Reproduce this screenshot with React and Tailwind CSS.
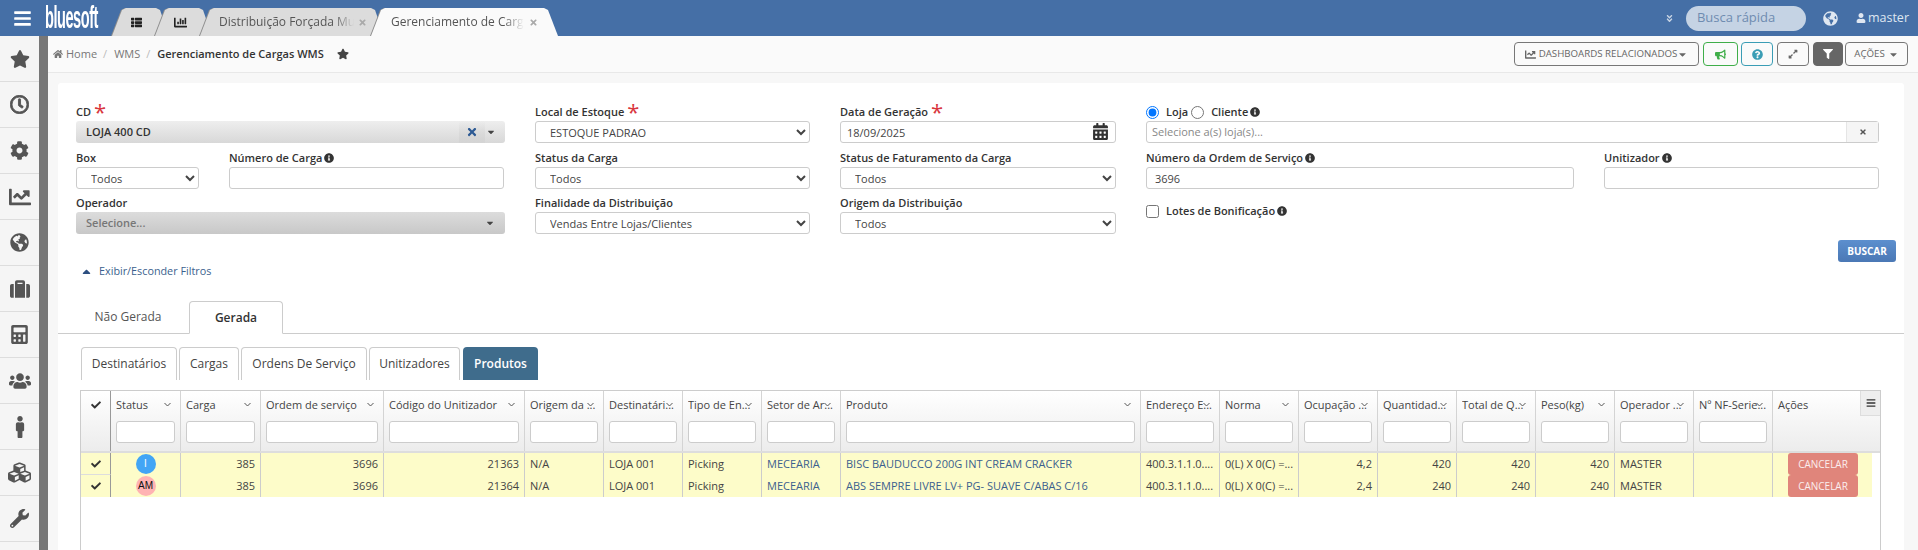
import React from 'react';
import {
  FaStar, FaRegClock, FaCog, FaChartLine, FaGlobeAmericas, FaSuitcase, FaCalculator, FaUsers, FaMale, FaCubes, FaWrench,
  FaHome, FaThList, FaChartBar, FaTimes, FaCheck, FaInfoCircle, FaCalendarAlt, FaBullhorn, FaQuestionCircle, FaExpandAlt,
  FaFilter, FaUser, FaAngleDoubleDown, FaBars, FaCaretDown, FaCaretUp,
} from 'react-icons/fa';

const sideIcons = [
  [FaStar, 'text-[20px]'],
  [FaRegClock, 'text-[19px] [&_svg]:[stroke-width:24]'],
  [FaCog, 'text-[19px]'],
  [FaChartLine, 'text-[22px]'],
  [FaGlobeAmericas, 'text-[19px]'],
  [FaSuitcase, 'text-[20px]'],
  [FaCalculator, 'text-[19px]'],
  [FaUsers, 'text-[22px]'],
  [FaMale, 'text-[22px]'],
  [FaCubes, 'text-[23px]'],
  [FaWrench, 'text-[19px]'],
];

const columns = [
  'Status', 'Carga', 'Ordem de serviço', 'Código do Unitizador', 'Origem da ...', 'Destinatári...', 'Tipo de En...',
  'Setor de Ar...', 'Produto', 'Endereço E...', 'Norma', 'Ocupação ...', 'Quantidad...', 'Total de Q...', 'Peso(kg)',
  'Operador ...', 'Nº NF-Serie...',
];

const rows = [
  { badge: 'I', badgeClass: 'bg-[#42a5f5] text-white', carga: '385', os: '3696', unit: '21363', produto: 'BISC BAUDUCCO 200G INT CREAM CRACKER', ocup: '4,2', qtd: '420' },
  { badge: 'AM', badgeClass: 'bg-[#ffb3b3] text-[#111]', carga: '385', os: '3696', unit: '21364', produto: 'ABS SEMPRE LIVRE LV+ PG- SUAVE C/ABAS C/16', ocup: '2,4', qtd: '240' },
];

const gridCols = 'grid grid-cols-[30px_70px_80px_123px_141px_79px_79px_79px_79px_300px_79px_79px_79px_79px_79px_79px_79px_79px_1fr]';

const Info = () => <FaInfoCircle className="ml-[2px] inline align-[-1px] text-[10px] text-[#333]" />;
const Req = () => <span className="ml-[3px] inline-block h-[10px] align-top text-[22px] font-normal leading-[16px] text-[#d9363e]">*</span>;
const Label = ({ children }) => <label className="block h-[18px] whitespace-nowrap text-[11px] font-semibold leading-[17px] text-[#333]">{children}</label>;

const NativeSelect = ({ value }) => (
  <select defaultValue={value} className="block h-[22px] w-full rounded-[3px] border border-[#ccc] bg-white pl-[10px] text-[11px] text-[#444]" style={{ appearance: 'auto' }}>
    <option>{value}</option>
  </select>
);

const TextInput = ({ value = '', className = '' }) => (
  <input readOnly value={value} className={`block h-[22px] w-full rounded-[3px] border border-[#ccc] bg-white text-[11px] text-[#444] ${className}`} />
);

const OutlineBtn = ({ children, className = '' }) => (
  <button className={`flex h-[24px] items-center justify-center rounded-[4px] border text-[9.7px] font-medium ${className}`}>{children}</button>
);

const Chevron = () => (
  <svg width="7" height="5" viewBox="0 0 7 5" className="absolute right-[4px] top-[5px]">
    <path d="M0.5 1 L3.5 4 L6.5 1" fill="none" stroke="#555" strokeWidth="1" />
  </svg>
);

const cell = 'border-r border-[#ccc] bg-[#fdfcc9] px-[5px]';

const App = () => {
  return (
    <div className="flex h-[550px] w-[1918px] flex-col overflow-hidden bg-white text-[11px] text-[#444] [font-family:'Open_Sans',sans-serif]">
      {/* top bar */}
      <div className="flex h-[36px] shrink-0 items-center bg-[#456fa6] text-white">
        <FaBars className="ml-[13px] text-[19px]" />
        <span className="ml-[13px] w-[55px] origin-left scale-x-[0.47] whitespace-nowrap text-[31px] font-bold leading-[30px] tracking-[-1px] [font-family:'Liberation_Sans',sans-serif]">bluesoft</span>
        <div className="ml-[12px] flex h-[28px] self-end">
          <div className="drop-shadow-[-1px_0_0_#8d8d8d]">
            <div className="flex h-full w-[57px] items-center justify-center bg-[#dcdcdc] pr-[9px] text-[#222] [clip-path:polygon(0_100%,10px_2px,14px_0,44px_0,48px_2px,100%_100%)]"><FaThList className="text-[11px]" /></div>
          </div>
          <div className="-ml-[14px] drop-shadow-[-1px_0_0_#8d8d8d]">
            <div className="flex h-full w-[57px] items-center justify-center bg-[#dcdcdc] pr-[7px] text-[#222] [clip-path:polygon(0_100%,10px_2px,14px_0,44px_0,48px_2px,100%_100%)]"><FaChartBar className="text-[13px]" /></div>
          </div>
          <div className="-ml-[12px] drop-shadow-[-1px_0_0_#8d8d8d]">
            <div className="flex h-full w-[184px] items-center bg-[#dcdcdc] pl-[19px] text-[12px] text-[#555] [clip-path:polygon(0_100%,10px_2px,14px_0,171px_0,175px_2px,100%_100%)]">
              <span className="w-[135px] overflow-hidden whitespace-nowrap [mask-image:linear-gradient(to_right,black_85%,transparent)]">Distribuição Forçada Mu</span>
              <FaTimes className="ml-[4px] text-[9px] text-[#aaa]" />
            </div>
          </div>
          <div className="-ml-[13px] drop-shadow-[-1px_0_0_#8d8d8d]">
            <div className="flex h-full w-[187px] items-center bg-[#fafafa] pl-[20px] text-[12px] text-[#555] [clip-path:polygon(0_100%,10px_2px,14px_0,173px_0,177px_2px,100%_100%)]">
              <span className="w-[133px] overflow-hidden whitespace-nowrap [mask-image:linear-gradient(to_right,black_85%,transparent)]">Gerenciamento de Carg</span>
              <FaTimes className="ml-[5px] text-[9px] text-[#aaa]" />
            </div>
          </div>
        </div>
        <div className="ml-auto flex items-center">
          <FaAngleDoubleDown className="text-[9px] text-[#c8d4e4]" />
          <div className="ml-[12px] flex h-[25px] w-[120px] items-center rounded-full bg-[#c5d3e4] pl-[11px] text-[13px] text-[#6f8cb0]">Busca rápida</div>
          <FaGlobeAmericas className="ml-[17px] text-[15px] text-[#dfe7f1]" />
          <FaUser className="ml-[18px] text-[10px] text-[#dfe7f1]" />
          <span className="ml-[2px] mr-[9px] text-[12.5px] text-[#dfe7f1]">master</span>
        </div>
      </div>

      <div className="flex min-h-0 flex-1">
        {/* sidebar */}
        <div className="w-[39px] shrink-0 bg-[#f5f5f5]">
          {sideIcons.map(([Icon, size], i) => (
            <div key={i} className={`flex h-[46px] items-center justify-center border-b border-[#ddd] text-[#555] ${size}`}><Icon /></div>
          ))}
        </div>
        <div className="w-[9px] shrink-0 bg-[#777]" />

        <div className="min-w-0 flex-1 bg-[#f7f7f7]">
          {/* breadcrumb */}
          <div className="flex h-[37px] items-center border-b border-[#e8e8e8] bg-[#fafafa] pl-[5px] pr-[10px] text-[11px]">
            <FaHome className="text-[10px] text-[#777]" />
            <span className="ml-[3px] text-[#777]">Home</span>
            <span className="ml-[6px] text-[#bbb]">/</span>
            <span className="ml-[7px] text-[#777]">WMS</span>
            <span className="ml-[6px] text-[#bbb]">/</span>
            <span className="ml-[7px] font-semibold text-[#333]">Gerenciamento de Cargas WMS</span>
            <FaStar className="ml-[13px] text-[12px] text-[#444]" />
            <div className="ml-auto flex">
              <OutlineBtn className="w-[185px] border-[#777] text-[#666]"><FaChartLine className="mr-[3px] text-[11px]" />DASHBOARDS RELACIONADOS<FaCaretDown className="text-[11px]" /></OutlineBtn>
              <OutlineBtn className="ml-[4px] w-[35px] border-[#3fae49] text-[#3fae49]"><FaBullhorn className="text-[11px]" /></OutlineBtn>
              <OutlineBtn className="ml-[3px] w-[32px] border-[#3a9db5] text-[#3a9db5]"><FaQuestionCircle className="text-[11px]" /></OutlineBtn>
              <OutlineBtn className="ml-[4px] w-[32px] border-[#777] text-[#666]"><FaExpandAlt className="text-[10px]" /></OutlineBtn>
              <OutlineBtn className="ml-[4px] w-[30px] border-[#666] bg-[#666] text-white"><FaFilter className="text-[10px]" /></OutlineBtn>
              <OutlineBtn className="ml-[2px] w-[63px] border-[#777] text-[#666]">AÇÕES<FaCaretDown className="ml-[3px] text-[11px]" /></OutlineBtn>
            </div>
          </div>

          {/* card */}
          <div className="ml-[10px] mr-[14px] mt-[10px] h-[500px] rounded-t-[3px] bg-white">
            <div className="pl-[18px] pt-[20px]">
              <div className="grid grid-cols-[429px_275px_276px_733px] grid-rows-[41px_40px_40px] gap-x-[30px] gap-y-[5px]">
                <div>
                  <Label>CD<Req /></Label>
                  <div className="flex h-[22px] items-center rounded-[3px] bg-gradient-to-b from-[#eee] to-[#d8d8d8] pl-[10px] pr-[9px] text-[11px] font-semibold text-[#333]">
                    LOJA 400 CD
                    <div className="ml-auto flex h-full w-[26px] items-center justify-center bg-gradient-to-b from-transparent to-[#d4d4d4]"><FaTimes className="text-[12px] text-[#2d5a94]" /></div>
                    <FaCaretDown className="ml-[1px] text-[10px] text-[#444]" />
                  </div>
                </div>
                <div><Label>Local de Estoque<Req /></Label><NativeSelect value="ESTOQUE PADRAO" /></div>
                <div>
                  <Label>Data de Geração<Req /></Label>
                  <div className="relative"><TextInput value="18/09/2025" className="px-[6px]" /><FaCalendarAlt className="absolute right-[7px] top-[2px] text-[17px] text-[#333]" /></div>
                </div>
                <div>
                  <div className="flex h-[18px] items-center text-[11px] font-semibold text-[#333]">
                    <input type="radio" name="tipo" defaultChecked className="m-0 h-[13px] w-[13px]" style={{ appearance: 'auto' }} />
                    <span className="ml-[7px]">Loja</span>
                    <input type="radio" name="tipo" className="ml-[3px] h-[13px] w-[13px]" style={{ appearance: 'auto' }} />
                    <span className="ml-[7px]">Cliente</span><Info />
                  </div>
                  <div className="flex h-[22px] rounded-[3px] border border-[#ccc]">
                    <div className="flex flex-1 items-center pl-[5px] text-[11px] text-[#888]">Selecione a(s) loja(s)...</div>
                    <div className="flex w-[32px] items-center justify-center border-l border-[#e5e5e5] bg-[#f5f5f5]"><FaTimes className="text-[8px] text-[#555]" /></div>
                  </div>
                </div>

                <div className="grid grid-cols-[123px_275px] gap-x-[30px]">
                  <div><Label>Box</Label><NativeSelect value="Todos" /></div>
                  <div><Label>Número de Carga<Info /></Label><TextInput className="px-[8px]" /></div>
                </div>
                <div><Label>Status da Carga</Label><NativeSelect value="Todos" /></div>
                <div><Label>Status de Faturamento da Carga</Label><NativeSelect value="Todos" /></div>
                <div className="grid grid-cols-[428px_275px] gap-x-[30px]">
                  <div><Label>Número da Ordem de Serviço<Info /></Label><TextInput value="3696" className="px-[8px]" /></div>
                  <div><Label>Unitizador<Info /></Label><TextInput className="px-[8px]" /></div>
                </div>

                <div>
                  <Label>Operador</Label>
                  <div className="flex h-[22px] items-center rounded-[3px] bg-gradient-to-b from-[#dcdcdc] to-[#c8c8c8] pl-[10px] pr-[10px] text-[11px] font-semibold text-[#777]">
                    Selecione...
                    <FaCaretDown className="ml-auto text-[10px] text-[#444]" />
                  </div>
                </div>
                <div><Label>Finalidade da Distribuição</Label><NativeSelect value="Vendas Entre Lojas/Clientes" /></div>
                <div><Label>Origem da Distribuição</Label><NativeSelect value="Todos" /></div>
                <div className="flex items-start pt-[9px] text-[11px] font-semibold text-[#333]">
                  <input type="checkbox" className="m-0 mt-[2px] h-[13px] w-[13px]" style={{ appearance: 'auto' }} />
                  <span className="ml-[7px]">Lotes de Bonificação<Info /></span>
                </div>
              </div>

              <div className="relative mt-[29px] flex h-[17px] items-center pl-[4px] text-[10.8px] text-[#3b5f8e]">
                <FaCaretUp className="text-[13px] text-[#2d4f80]" />
                <span className="ml-[6px]">Exibir/Esconder Filtros</span>
                <button className="absolute -top-[23px] right-[8px] h-[22px] w-[58px] rounded-[3px] bg-gradient-to-b from-[#5c8fce] to-[#4a78b5] text-[10px] font-bold text-white">BUSCAR</button>
              </div>
            </div>

            {/* tabs */}
            <div className="mt-[21px] flex h-[33px] items-end border-b border-[#ccc] pl-[1px]">
              <div className="flex h-[32px] w-[130px] items-center justify-center pl-[8px] text-[12px] text-[#555]">Não Gerada</div>
              <div className="-mb-px flex h-[33px] w-[94px] items-center justify-center rounded-t-[4px] border border-[#ccc] border-b-white bg-white text-[12px] font-semibold text-[#333]">Gerada</div>
            </div>

            {/* sub tabs */}
            <div className="ml-[23px] mt-[13px] flex h-[33px] gap-[2px] text-[12px] text-[#444]">
              <div className="flex w-[96px] items-center justify-center rounded-t-[4px] border border-b-0 border-[#ccc]">Destinatários</div>
              <div className="flex w-[60px] items-center justify-center rounded-t-[4px] border border-b-0 border-[#ccc]">Cargas</div>
              <div className="flex w-[126px] items-center justify-center rounded-t-[4px] border border-b-0 border-[#ccc]">Ordens De Serviço</div>
              <div className="flex w-[91px] items-center justify-center rounded-t-[4px] border border-b-0 border-[#ccc]">Unitizadores</div>
              <div className="ml-[1px] flex w-[75px] items-center justify-center rounded-t-[4px] bg-[#3f6c8c] font-semibold text-white">Produtos</div>
            </div>

            {/* grid */}
            <div className="ml-[22px] mr-[23px] mt-[10px] h-[170px] border border-b-0 border-[#ccc] text-[11px]">
              <div className={`${gridCols} h-[62px] border-b-2 border-[#ddd] bg-gradient-to-b from-white to-[#ececec]`}>
                <div className="flex justify-center border-r border-[#999] pt-[9px]"><FaCheck className="text-[10px] text-[#333]" /></div>
                {columns.map((label) => (
                  <div key={label} className="border-r border-[#d4d4d4] px-[5px] pt-[6px]">
                    <div className="relative h-[16px] overflow-hidden whitespace-nowrap leading-[16px] text-[#444]">
                      {label}
                      <Chevron />
                    </div>
                    <input readOnly className="mt-[8px] block h-[22px] w-full rounded-[3px] border border-[#ccc] bg-white" />
                  </div>
                ))}
                <div className="relative px-[5px] pt-[6px] leading-[16px] text-[#444]">
                  Ações
                  <div className="absolute right-0 top-0 flex h-[25px] w-[20px] items-center justify-center border-b border-l border-[#ddd] bg-[#eee]"><FaBars className="text-[10px] text-[#333]" /></div>
                </div>
              </div>
              {rows.map((r, i) => (
                <div key={r.unit} className={`${gridCols} h-[22px] leading-[22px]`}>
                  <div className={`flex items-center justify-center border-r border-[#999] bg-[#fdfcc9] ${i === 0 ? 'border-b border-b-[#ddd]' : ''}`}><FaCheck className="text-[10px] text-[#333]" /></div>
                  <div className="flex items-center justify-center border-r border-[#ccc] bg-[#fdfcc9]">
                    <span className={`flex h-[20px] w-[20px] items-center justify-center rounded-full text-[10px] [font-family:'Liberation_Sans',sans-serif] ${r.badgeClass}`}>{r.badge}</span>
                  </div>
                  <div className={`${cell} text-right`}>{r.carga}</div>
                  <div className={`${cell} text-right`}>{r.os}</div>
                  <div className={`${cell} text-right`}>{r.unit}</div>
                  <div className={cell}>N/A</div>
                  <div className={cell}>LOJA 001</div>
                  <div className={cell}>Picking</div>
                  <div className={`${cell} text-[#3b5f8e]`}>MECEARIA</div>
                  <div className={`${cell} text-[#3b5f8e]`}>{r.produto}</div>
                  <div className={`${cell} overflow-hidden whitespace-nowrap`}>400.3.1.1.0....</div>
                  <div className={`${cell} overflow-hidden whitespace-nowrap`}>0(L) X 0(C) =...</div>
                  <div className={`${cell} text-right`}>{r.ocup}</div>
                  <div className={`${cell} text-right`}>{r.qtd}</div>
                  <div className={`${cell} text-right`}>{r.qtd}</div>
                  <div className={`${cell} text-right`}>{r.qtd}</div>
                  <div className={cell}>MASTER</div>
                  <div className={cell} />
                  <div className="mr-[8px] bg-[#fdfcc9] pl-[15px]">
                    <button className="h-[22px] w-[70px] rounded-[3px] bg-[#e0857b] text-[10px] font-medium leading-[22px] text-[#fbeeee]">CANCELAR</button>
                  </div>
                </div>
              ))}
            </div>
          </div>
        </div>
      </div>
    </div>
  );
};

export default App;
